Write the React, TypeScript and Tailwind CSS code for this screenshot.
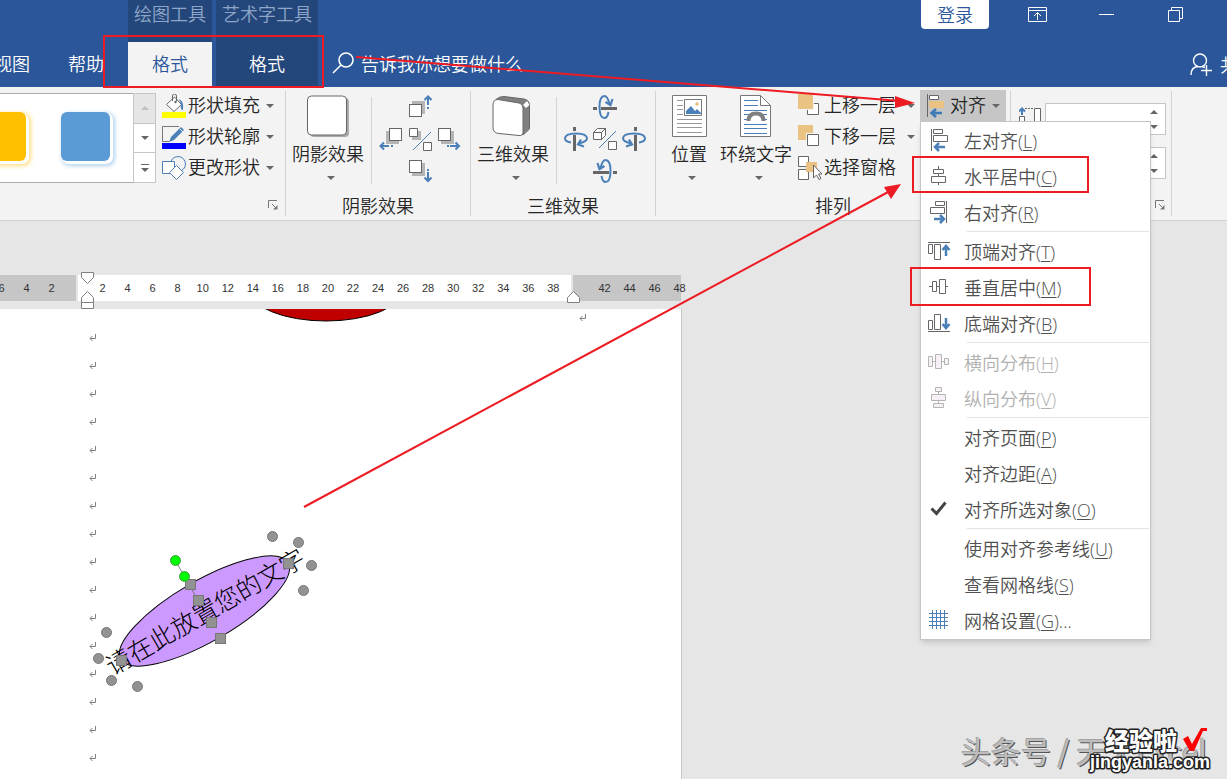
import React from 'react';

type IconProps = { className?: string };

// ── Shared bits ───────────────────────────────────────────────────────────

const Caret = ({ up = false, className = 'text-[#666]' }: { up?: boolean; className?: string }) => (
  <svg width="8" height="4" viewBox="0 0 8 4" className={`shrink-0 ${className}`} fill="currentColor">
    <path d={up ? 'M0 4h8L4 0z' : 'M0 0h8L4 4z'} />
  </svg>
);

const Divider = () => <div className="w-px bg-[#d2d2d2] my-1 shrink-0" />;

const Launcher = () => (
  <button type="button" aria-label="更多选项" className="shrink-0">
    <svg width="10" height="10" viewBox="0 0 10 10" fill="none" stroke="#777">
      <path d="M.5 8V.5H9M4 4l3 3" />
      <path d="M9.500 5v4.500H5z" fill="#777" stroke="none" />
    </svg>
  </button>
);

const Group = ({ label, launcher, className = '', children }: {
  label?: string; launcher?: boolean; className?: string; children: React.ReactNode;
}) => (
  <section className={`shrink-0 flex flex-col pt-[3px] ${className}`}>
    <div className="flex h-[94px]">{children}</div>
    <div className="flex items-center h-6 mt-[9px] text-lg leading-6">
      <span className="flex-1 text-center">{label}</span>
      {launcher && <Launcher />}
    </div>
  </section>
);

const BigButton = ({ icon, label }: { icon: React.ReactNode; label: string }) => (
  <button type="button" className="shrink-0 flex flex-col items-center pt-[5px] text-lg leading-6">
    {icon}
    <span className="mt-[3px] mb-[11px]">{label}</span>
    <Caret className="ml-[6px] text-[#666]" />
  </button>
);

// ── Ribbon icons ──────────────────────────────────────────────────────────

const FillIcon = () => (
  <svg width="24" height="24" viewBox="0 0 24 24" fill="none" stroke="#666">
    <path d="M4.500 10.500L12.500 3l7 7.500-7.500 7z" fill="#fff" />
    <path d="M10.500 7V2q0-2 2-2t2 2v5" />
    <path d="M17 5q5 2 4 11-3 0-2-6z" fill="#4a7fb8" stroke="none" />
    <circle cx="13.500" cy="8" r="1.200" fill="#666" stroke="none" />
    <path d="M0 18h24v6H0z" fill="#ff0" stroke="none" />
  </svg>
);

const OutlineIcon = () => (
  <svg width="24" height="24" viewBox="0 0 24 24" fill="none">
    <path d="M17 1.500H.5v15H7" stroke="#777" />
    <path d="M7 17l2-5L19 2l3 3L12 15z" fill="#4a7fb8" />
    <path d="M18 4l3 3" stroke="#f3f3f3" />
    <path d="M0 18h24v6H0z" fill="#00f" />
  </svg>
);

const ChangeShapeIcon = () => (
  <svg width="24" height="24" viewBox="0 0 24 24" fill="#fff" stroke="#4a7fb8">
    <circle cx="16" cy="8" r="7.500" fill="#f3f3f3" />
    <path d="M.5 5.500h12v12H.5z" />
    <path d="M14.500 9.500l7 7-7 7-7-7z" />
  </svg>
);

const ShadowIcon = () => (
  <svg width="44" height="43" viewBox="0 0 44 43">
    <rect x="4" y="3" width="39" height="39" rx="4" fill="#aaa" />
    <rect x="1.500" y="1" width="39" height="39" rx="4" fill="#fff" stroke="#666" />
  </svg>
);

const CubeIcon = () => (
  <svg width="44" height="43" viewBox="0 0 44 43" strokeLinejoin="round">
    <path d="M5 4.500q3-3 8-3l20 2.500q5 1 5.500 6v24l-6.500 6z" fill="#808080" stroke="#666" />
    <path d="M7 4.500l21 3.500q4 .5 4 5v24q0 4-4 3.500l-20-2q-6-.5-6-6V10q0-5.500 5-5.500z" fill="#fff" stroke="#666" />
    <path d="M32 10l4-4 2.500 4-3.500 3z" fill="#fff" />
  </svg>
);

const NudgeIcon = ({ dir }: { dir: 'up' | 'down' | 'left' | 'right' }) => {
  const s = {
    up: { bx: 3, by: -3, arrow: 'M20 14v-2M20 10V1M16.500 5L20 1.500 23.500 5', x: 1, y: 9 },
    down: { bx: 3, by: 3, arrow: 'M20 10v2M20 13v9M16.500 18.500L20 22l3.500-3.500', x: 1, y: 1 },
    left: { bx: -3, by: 3, arrow: 'M14 19h-2M10 19H1M5 15.500L1.500 19 5 22.500', x: 10, y: 1 },
    right: { bx: 3, by: 3, arrow: 'M10 19h2M13 19h9M18.500 15.500L22 19l-3.500 3.500', x: 1, y: 1 },
  }[dir];
  return (
    <svg width="24" height="24" viewBox="0 0 24 24" fill="none">
      <rect x={s.x + s.bx} y={s.y + s.by} width="13" height="13" fill="#b5b5b5" />
      <rect x={s.x + 0.5} y={s.y + 0.5} width="12" height="12" fill="#fff" stroke="#666" />
      <path d={s.arrow} stroke="#4a7fb8" strokeWidth="2" />
    </svg>
  );
};

const ShadowToggleIcon = () => (
  <svg width="24" height="24" viewBox="0 0 24 24" fill="none">
    <path d="M4 4h9v9H4z" fill="#b5b5b5" />
    <path d="M1.500 1.500h8v8h-8zM15.500 15.500h8v8h-8z" fill="#fff" stroke="#666" />
    <path d="M23 5L5 23" stroke="#4a7fb8" />
  </svg>
);

const CubeToggleIcon = () => (
  <svg width="24" height="24" viewBox="0 0 24 24" fill="#fff" stroke="#666">
    <path d="M.5 5.500l4-4h8v7l-4 4h-8zM.5 5.500h8l4-4M8.500 5.500v7M15.500 14.500h8v8h-8z" />
    <path d="M23 4L6 21" stroke="#4a7fb8" />
  </svg>
);

const tiltTransforms = {
  up: '',
  left: 'rotate(90 12 12)',
  right: 'translate(24 0) scale(-1 1) rotate(90 12 12)',
  down: 'translate(24 0) scale(-1 1)',
};

// Axis bar with the turning arrow wrapped around it
const TiltIcon = ({ dir }: { dir: keyof typeof tiltTransforms }) => (
  <svg width="24" height="24" viewBox="0 0 24 24" fill="none">
    <g transform={tiltTransforms[dir]}>
      <path d="M0 13.500h4M8 13.500h16" stroke="#666" strokeWidth="3" />
      <path d="M15.500 17q-1 6-4 6-5 0-5-11t5-11q3 0 5 8" stroke="#4a7fb8" strokeWidth="2" />
      <path d="M12.500 7l5 3 2-6" stroke="#4a7fb8" strokeWidth="2.200" />
    </g>
  </svg>
);

const PositionIcon = () => (
  <svg width="35" height="43" viewBox="0 0 35 43" fill="none">
    <path d="M.5.500h34v41H.5z" fill="#fff" stroke="#777" />
    <path d="M5 5.500h6M5 10.500h6M5 14.500h6M5 19.500h6M5 24.500h25M5 28.500h25M5 32.500h25M5 37.500h25" stroke="#999" />
    <path d="M12.500 4.500h17v16h-17z" fill="#fff" stroke="#777" />
    <path d="M14 19v-3l5-5 4 5 2-2 4 4v1z" fill="#4a7fb8" />
    <circle cx="25" cy="9" r="1.800" fill="#e9bd78" />
  </svg>
);

const WrapIcon = () => (
  <svg width="32" height="43" viewBox="0 0 32 43" fill="none">
    <path d="M.5.500h20l10 10v31H.5z" fill="#fff" stroke="#777" />
    <path d="M20.500.500v10h10" stroke="#777" />
    <path d="M4 5.500h14M4 10.500h14M4 15.500h23M4 19.500h5M23 19.500h4M4 24.500h3M25 24.500h2M4 29.500h23M4 33.500h23M4 38.500h23" stroke="#4a7fb8" />
    <path d="M8.500 26q0-7.500 7.500-7.500t7.500 7.500" stroke="#808080" strokeWidth="4" />
  </svg>
);

const ForwardIcon = () => (
  <svg width="22" height="24" viewBox="0 0 22 24" fill="none">
    <path d="M9.500 9.500h11v11h-11z" fill="#fff" stroke="#666" />
    <path d="M0 0h16v16H0z" fill="#f3f3f3" />
    <path d="M0 0h15v15H0z" fill="#eac282" />
  </svg>
);

const BackwardIcon = () => (
  <svg width="22" height="24" viewBox="0 0 22 24" fill="none">
    <path d="M0 0h15v15H0z" fill="#eac282" />
    <path d="M8 8h14v14H8z" fill="#f3f3f3" />
    <path d="M9.500 9.500h11v11h-11z" fill="#fff" stroke="#666" />
  </svg>
);

const PaneIcon = () => (
  <svg width="24" height="24" viewBox="0 0 24 24">
    <path d="M.5.500h10v10H.5zM.5 13.500h10v10H.5z" fill="#fff" stroke="#666" />
    <path d="M8 6h11v10H8z" fill="#eac282" />
    <path d="M15.500 9v13l3-3 2.500 4.500 2-1-2.500-4.500h3.500z" fill="#fff" stroke="#666" />
  </svg>
);

const AlignIcon = () => (
  <svg width="18" height="24" viewBox="0 0 18 24" fill="none">
    <path d="M.5 0v23" stroke="#666" />
    <path d="M2.500 1.500h9v4h-9z" fill="#fff" stroke="#666" />
    <path d="M2 7h15v7H2z" fill="#eac282" />
    <path d="M15 19H5M9 15l-4.500 4L9 23" stroke="#3e78b5" strokeWidth="2.500" />
  </svg>
);

// ── Menu icons ────────────────────────────────────────────────────────────

const MenuSvg = ({ children, muted }: { children: React.ReactNode; muted?: boolean }) => (
  <svg width="24" height="24" viewBox="0 0 24 24" fill={muted ? '#f7f1f7' : 'none'} stroke={muted ? '#b5b5b5' : '#666'} className="shrink-0">
    {children}
  </svg>
);

const blue = { stroke: '#4a7fb8', strokeWidth: 2.5, fill: 'none' };

const menuIcons = {
  left: (
    <MenuSvg>
      <path d="M4.500 1v22M6.500 1.500h9v4h-9zM6.500 7.500h14v6h-14z" />
      <path d="M18 19H8M12 15l-4 4 4 4" {...blue} />
    </MenuSvg>
  ),
  center: (
    <MenuSvg>
      <path d="M11.500 2v3M11.500 10v3M11.500 18v3M6.500 5.500h10v4h-10zM4.500 12.500h14v6h-14z" />
    </MenuSvg>
  ),
  right: (
    <MenuSvg>
      <path d="M19.500 1v22M8.500 1.500h9v4h-9zM3.500 7.500h14v6h-14z" />
      <path d="M7 19h10M13 15l4 4-4 4" {...blue} />
    </MenuSvg>
  ),
  top: (
    <MenuSvg>
      <path d="M1 3.500h22M1.500 5.500h4v9h-4zM7.500 5.500h6v15h-6z" />
      <path d="M19 17V7M15.500 11L19 7l3.500 4" {...blue} />
    </MenuSvg>
  ),
  middle: (
    <MenuSvg>
      <path d="M2 11.500h3M9 11.500h3M18 11.500h3M5.500 6.500h4v10h-4zM12.500 4.500h6v14h-6z" />
    </MenuSvg>
  ),
  bottom: (
    <MenuSvg>
      <path d="M1 20.500h22M1.500 9.500h4v9h-4zM7.500 3.500h6v15h-6z" />
      <path d="M19 7v10M15.500 13L19 17l3.500-4" {...blue} />
    </MenuSvg>
  ),
  horizontal: (
    <MenuSvg muted>
      <path d="M5 11.500h3M14 11.500h3M1.500 6.500h4v10h-4zM8.500 4.500h6v14h-6zM17.500 8.500h4v6h-4z" />
    </MenuSvg>
  ),
  vertical: (
    <MenuSvg muted>
      <path d="M11.500 5v3M11.500 14v3M8.500 1.500h6v4h-6zM4.500 8.500h14v6h-14zM6.500 17.500h10v4h-10z" />
    </MenuSvg>
  ),
  check: (
    <MenuSvg>
      <path d="M4.500 11.500l5 5 9-11" stroke="#444" strokeWidth="3" />
    </MenuSvg>
  ),
  grid: (
    <MenuSvg>
      <path d="M5.500 2v19M9.500 2v19M13.500 2v19M17.500 2v19M2 5.500h19M2 9.500h19M2 13.500h19M2 17.500h19" stroke="#4a7fb8" />
    </MenuSvg>
  ),
};

type MenuEntry = { text: string; hotkey: string; icon?: keyof typeof menuIcons; disabled?: boolean; tail?: string };

const menuSections: MenuEntry[][] = [
  [
    { text: '左对齐', hotkey: 'L', icon: 'left' },
    { text: '水平居中', hotkey: 'C', icon: 'center' },
    { text: '右对齐', hotkey: 'R', icon: 'right' },
  ],
  [
    { text: '顶端对齐', hotkey: 'T', icon: 'top' },
    { text: '垂直居中', hotkey: 'M', icon: 'middle' },
    { text: '底端对齐', hotkey: 'B', icon: 'bottom' },
  ],
  [
    { text: '横向分布', hotkey: 'H', icon: 'horizontal', disabled: true },
    { text: '纵向分布', hotkey: 'V', icon: 'vertical', disabled: true },
  ],
  [
    { text: '对齐页面', hotkey: 'P' },
    { text: '对齐边距', hotkey: 'A' },
    { text: '对齐所选对象', hotkey: 'O', icon: 'check' },
  ],
  [
    { text: '使用对齐参考线', hotkey: 'U' },
    { text: '查看网格线', hotkey: 'S' },
    { text: '网格设置', hotkey: 'G', icon: 'grid', tail: '...' },
  ],
];

const AlignMenu = () => (
  <div role="menu" className="absolute left-0 top-full z-10 w-[231px] bg-white border border-[#c6c6c6] pb-px shadow-md font-['Open_Sans','Noto_Sans_CJK_SC',sans-serif]">
    {menuSections.map((section, i) => (
      <React.Fragment key={i}>
        {i > 0 && <div className="h-px my-px ml-[46px] mr-px bg-[#e1e3e6]" />}
        {section.map(item => (
          <button
            key={item.text}
            type="button"
            role="menuitem"
            disabled={item.disabled}
            className={`flex items-center w-full h-9 pl-[6px] gap-[13px] text-lg font-[350] whitespace-nowrap ${item.disabled ? 'text-[#b1b1b1]' : 'text-[#505050]'}`}
          >
            {item.icon ? menuIcons[item.icon] : <span className="w-6 shrink-0" />}
            <span className="pt-[2px]">{item.text}(<span className="underline underline-offset-2">{item.hotkey}</span>){item.tail}</span>
          </button>
        ))}
      </React.Fragment>
    ))}
  </div>
);

// ── Title bar ─────────────────────────────────────────────────────────────

const ContextTab = ({ title, active, className }: { title: string; active?: boolean; className: string }) => (
  <div className={`shrink-0 flex flex-col bg-[#24477b] ${className}`}>
    <div className="h-[42px] pt-px text-center leading-6 text-[#8fa6c8]">{title}</div>
    <button type="button" className={`flex-1 pb-1 ${active ? 'bg-[#f3f3f3] text-[#2b579a]' : 'text-white'}`}>格式</button>
  </div>
);

const UserPlusIcon = ({ className }: IconProps) => (
  <svg width="23" height="23" viewBox="0 0 23 23" fill="none" stroke="#fff" strokeWidth="1.400" className={className}>
    <circle cx="10" cy="7.500" r="6.500" />
    <path d="M1 22q0-8 7-8.500M12 13.500l3 1M11 17.500h11M16.500 12v11" />
  </svg>
);

const TitleBar = () => (
  <header className="flex h-[87px] shrink-0 bg-[#2b579a] text-white text-lg font-[350] whitespace-nowrap overflow-hidden">
    <div className="w-32 shrink-0 flex justify-end gap-[38px] pt-[42px] pb-1 pr-6 overflow-hidden">
      <button type="button" className="shrink-0">视图</button>
      <button type="button" className="shrink-0">帮助</button>
    </div>
    <ContextTab title="绘图工具" active className="w-[84px]" />
    <ContextTab title="艺术字工具" className="w-[102px] ml-1" />
    <button type="button" className="flex items-center gap-[6px] pt-[42px] pb-1 pl-[14px]">
      <svg width="23" height="24" viewBox="0 0 23 24" fill="none" stroke="#fff" strokeWidth="1.600">
        <circle cx="14" cy="9" r="7" />
        <path d="M9 14l-8 8" />
      </svg>
      告诉我你想要做什么
    </button>
    <div className="ml-auto shrink-0 flex flex-col">
      <div className="flex items-center h-[29px] pr-[43px]">
        <button type="button" className="w-[68px] h-full pb-[2px] rounded-b-sm bg-white text-[#2b579a]">登录</button>
        <button type="button" aria-label="功能区显示选项" className="ml-[39px]">
          <svg width="20" height="16" viewBox="0 0 20 16" fill="none" stroke="#fff">
            <path d="M.5.500h18v14H.5zM.5 3.500h18M9.500 13V6M6 9l3.500-3.500L13 9" />
          </svg>
        </button>
        <button type="button" aria-label="最小化" className="ml-[51px]">
          <svg width="15" height="16" viewBox="0 0 15 16" stroke="#fff"><path d="M0 7.500h15" /></svg>
        </button>
        <button type="button" aria-label="还原" className="ml-[54px]">
          <svg width="16" height="16" viewBox="0 0 16 16" fill="none" stroke="#fff">
            <path d="M.5 3.500h11v11H.5zM3.500 3V.500h11v11H12" />
          </svg>
        </button>
      </div>
      <button type="button" className="flex items-center justify-end gap-[7px] mt-[21px] -mr-[29px]">
        <UserPlusIcon />
        共享
      </button>
    </div>
  </header>
);

// ── Ribbon ────────────────────────────────────────────────────────────────

const ShapeRow = ({ icon, label }: { icon: React.ReactNode; label: string }) => (
  <button type="button" className="flex items-center h-[31px] gap-[2px] text-lg">
    {icon}
    <span className="pb-[3px] mr-1">{label}</span>
    <Caret />
  </button>
);

const ArrangeRow = ({ icon, label, split }: { icon: React.ReactNode; label: string; split?: boolean }) => (
  <div className="flex items-center h-[31px] text-lg">
    <button type="button" className="flex items-center">
      <span className="w-[26px] shrink-0">{icon}</span>
      <span className="pb-[3px]">{label}</span>
    </button>
    {split && <button type="button" aria-label={`${label}选项`} className="flex ml-[11px]"><Caret /></button>}
  </div>
);

const SizeField = ({ label }: { label: string }) => (
  <div className="flex w-[121px] h-8 bg-white border border-[#c6c6c6]">
    <input type="text" aria-label={label} className="flex-1 min-w-0 px-2 outline-none" />
    <div className="flex flex-col justify-around items-center w-[22px]">
      <button type="button" aria-label={`增加${label}`} className="flex h-3 items-center"><Caret up /></button>
      <button type="button" aria-label={`减少${label}`} className="flex h-3 items-center"><Caret /></button>
    </div>
  </div>
);

const EffectPad = ({ up, left, mid, right, down }: Record<'up' | 'left' | 'mid' | 'right' | 'down', React.ReactNode>) => (
  <div className="grid grid-cols-3 w-[90px] h-24 ml-[5px] mt-px place-items-center">
    <button type="button" aria-label="上" className="col-start-2">{up}</button>
    <button type="button" aria-label="左" className="col-start-1">{left}</button>
    <button type="button" aria-label="开关">{mid}</button>
    <button type="button" aria-label="右">{right}</button>
    <button type="button" aria-label="下" className="col-start-2">{down}</button>
  </div>
);

const ShortDivider = () => <div className="w-px ml-[7px] mt-[7px] bg-[#d2d2d2]" />;

const Ribbon = () => (
  <div className="flex h-[134px] shrink-0 bg-[#f3f3f3] border-b border-[#d2d2d2] text-[#262626] font-[350] whitespace-nowrap">
    <Group launcher className="w-[285px] pr-[7px]">
      <div className="flex h-[90px] mt-[3px] shrink-0">
        <div className="flex items-center w-[133px] gap-[35px] pb-1 border-y border-[#ababab] bg-white overflow-hidden">
          <button type="button" aria-label="黄色样式" className="shrink-0 -ml-[23px] size-[49px] rounded-md bg-[#ffc000] shadow-[2px_2px_0_1px_#fff,3px_3px_4px_2px_#ffdf85]" />
          <button type="button" aria-label="蓝色样式" className="shrink-0 size-[49px] rounded-md bg-[#5b9bd5] shadow-[2px_2px_0_1px_#fff,3px_3px_4px_2px_#b3d2ee]" />
        </div>
        <div className="flex flex-col w-[23px] border border-[#c6c6c6] bg-white divide-y divide-[#c6c6c6]">
          <button type="button" aria-label="上一行" className="flex flex-1 items-center justify-center bg-[#e5e5e5]"><Caret up className="text-[#c0c0c0]" /></button>
          <button type="button" aria-label="下一行" className="flex flex-1 items-center justify-center"><Caret /></button>
          <button type="button" aria-label="其他样式" className="flex flex-1 flex-col gap-[3px] items-center justify-center">
            <span className="w-2 h-px bg-[#666]" />
            <Caret />
          </button>
        </div>
      </div>
      <div className="ml-[6px]">
        <ShapeRow icon={<FillIcon />} label="形状填充" />
        <ShapeRow icon={<OutlineIcon />} label="形状轮廓" />
        <ShapeRow icon={<ChangeShapeIcon />} label="更改形状" />
      </div>
    </Group>
    <Divider />
    <Group label="阴影效果" className="w-[184px] pl-[6px] pr-[6px]">
      <BigButton icon={<ShadowIcon />} label="阴影效果" />
      <ShortDivider />
      <EffectPad
        up={<NudgeIcon dir="up" />}
        left={<NudgeIcon dir="left" />}
        mid={<ShadowToggleIcon />}
        right={<NudgeIcon dir="right" />}
        down={<NudgeIcon dir="down" />}
      />
    </Group>
    <Divider />
    <Group label="三维效果" className="w-[184px] pl-[6px] pr-[6px]">
      <BigButton icon={<CubeIcon />} label="三维效果" />
      <ShortDivider />
      <EffectPad
        up={<TiltIcon dir="up" />}
        left={<TiltIcon dir="left" />}
        mid={<CubeToggleIcon />}
        right={<TiltIcon dir="right" />}
        down={<TiltIcon dir="down" />}
      />
    </Group>
    <Divider />
    <Group label="排列" className="w-[354px]">
      <div className="flex gap-[13px] ml-[15px]">
        <BigButton icon={<PositionIcon />} label="位置" />
        <BigButton icon={<WrapIcon />} label="环绕文字" />
      </div>
      <div className="w-[122px] ml-[6px] shrink-0">
        <ArrangeRow icon={<ForwardIcon />} label="上移一层" split />
        <ArrangeRow icon={<BackwardIcon />} label="下移一层" split />
        <ArrangeRow icon={<PaneIcon />} label="选择窗格" />
      </div>
      <div className="relative self-start">
        <button type="button" aria-haspopup="menu" aria-expanded="true" className="flex items-center w-[86px] h-[31px] pl-[7px] bg-[#c6c6c6] text-lg">
          <AlignIcon />
          <span className="ml-[5px] mr-[6px] pb-[3px]">对齐</span>
          <Caret />
        </button>
        <AlignMenu />
      </div>
    </Group>
    <Divider />
    <Group launcher className="w-[160px] pl-2 pr-[6px]">
      <svg width="23" height="24" viewBox="0 0 23 24" fill="none" stroke="#666" className="shrink-0 mt-[15px]">
        <path d="M.5 24V11.500h5V24M15.500 24V3.500h6V24" fill="#fff" />
        <path d="M6 3.500h9" strokeDasharray="2 1" />
        <path d="M3 10V4M0 6.500L3 3.500l3 3" stroke="#4a7fb8" strokeWidth="2" />
      </svg>
      <div className="flex flex-col gap-3 ml-[3px] pt-[13px]">
        <SizeField label="高度" />
        <SizeField label="宽度" />
      </div>
    </Group>
    <Divider />
  </div>
);

// ── Ruler ─────────────────────────────────────────────────────────────────

const bodyTicks = Array.from({ length: 19 }, (_, i) => (i + 1) * 2);

const Ruler = () => (
  <div className="relative flex gap-[2px] w-[681px] h-[26px] mt-[54px] shrink-0 text-[11px] leading-[26px] text-center text-[#333] font-['Liberation_Sans',sans-serif]">
    <div className="w-[76px] shrink-0 flex justify-end pr-3 bg-[#c6c6c6] overflow-hidden">
      {[6, 4, 2].map(n => <span key={n} className="w-[25px] shrink-0">{n}</span>)}
    </div>
    <div className="flex flex-1 pl-3 pr-[5px] bg-white">
      {bodyTicks.map(n => <span key={n} className="flex-1">{n}</span>)}
    </div>
    <div className="w-[108px] shrink-0 flex pl-[19px] bg-[#c6c6c6]">
      {[42, 44, 46, 48].map(n => <span key={n} className="w-[25px] shrink-0">{n}</span>)}
    </div>
    {/* Indent markers sit over the scale */}
    <svg width="14" height="38" viewBox="0 0 14 38" fill="#fff" stroke="#808080" className="absolute left-[81px] -top-[3px]">
      <path d="M.5.500h12v5l-6 6-6-6zM.5 30.500v-5l6-6 6 6v5zM.5 30.500h12v6H.5z" />
    </svg>
    <svg width="14" height="13" viewBox="0 0 14 13" fill="#fff" stroke="#808080" className="absolute left-[567px] top-4">
      <path d="M.5 11.500v-5l6-6 6 6v5z" />
    </svg>
  </div>
);

// ── Document ──────────────────────────────────────────────────────────────

const ParagraphMark = ({ className = 'shrink-0' }: IconProps) => (
  <svg width="8" height="8" viewBox="0 0 8 8" fill="none" stroke="#808080" className={className}>
    <path d="M6.500 0v4.500H1M3.500 2L1 4.500 3.500 7" />
  </svg>
);

const squareHandles = [[190, 275], [198, 291], [211, 313], [220, 329], [121, 351], [288, 254]];
const roundHandles = [[272, 227], [298, 233], [311, 256], [303, 281], [106, 323], [98, 349], [111, 371], [137, 377]];
const rotateHandles = [[175, 251], [184, 267]];

const Page = () => (
  <main className="relative flex-1 w-[682px] mt-2 bg-white border-r border-[#c6c6c6] overflow-hidden">
    <div className="flex flex-col gap-5 pt-[25px] pl-[89px]">
      {Array.from({ length: 16 }, (_, i) => <ParagraphMark key={i} />)}
    </div>
    <ParagraphMark className="absolute left-[579px] top-[5px]" />
    <svg width="681" height="470" viewBox="0 0 681 470" className="absolute left-0 top-0">
      <ellipse cx="326" cy="-20" rx="77" ry="32" fill="#c00000" stroke="#000" />
      <ellipse cx="204.500" cy="302" rx="96.500" ry="30.500" transform="rotate(-30 204.500 302)" fill="#cc99ff" stroke="#000" />
      <text
        x="205"
        y="312"
        textAnchor="middle"
        transform="rotate(-30 205 302)"
        className="text-[25px] font-light font-['Liberation_Serif','Noto_Sans_CJK_SC',serif]"
      >
        请在此放置您的文字
      </text>
      <path d="M175 251l23 40" stroke="#666" strokeWidth=".8" />
      {squareHandles.map(([x, y]) => (
        <rect key={`${x}-${y}`} x={x - 4.5} y={y - 4.5} width="10" height="10" fill="#929292" stroke="#777" />
      ))}
      {roundHandles.map(([x, y]) => (
        <circle key={`${x}-${y}`} cx={x + 0.5} cy={y + 0.5} r="5" fill="#929292" stroke="#777" />
      ))}
      {rotateHandles.map(([x, y]) => (
        <circle key={`${x}-${y}`} cx={x + 0.5} cy={y + 0.5} r="5" fill="#0f0" stroke="#4a9a4a" />
      ))}
    </svg>
  </main>
);

// ── Overlays ──────────────────────────────────────────────────────────────

const Annotations = () => (
  <svg width="1227" height="520" viewBox="0 0 1227 520" fill="none" stroke="#ed1c24" strokeWidth="2" className="absolute left-0 top-0 z-20 pointer-events-none">
    <path d="M104 36h219v51H104zM913 157h175v35H913zM911 268h179v37H911z" />
    <path d="M356 57l544 44M304 507l586-316" />
    <path d="M915 103l-20-7v12zM901 184l-17 3 7 12z" fill="#ed1c24" stroke="none" />
  </svg>
);

const Watermark = () => (
  <div className="absolute right-4 bottom-0 z-20 w-[250px] h-[54px] whitespace-nowrap">
    <span className="absolute left-0 top-[2px] text-[30px] leading-[46px] text-[#bdbdbd] [text-shadow:1px_1px_0_#555,-1px_-1px_0_#a5a5a5]">头条号 / 天天Excel</span>
    <svg width="126" height="54" viewBox="0 0 126 54" className="absolute right-0 top-0 overflow-visible font-['Liberation_Sans','Noto_Sans_CJK_SC',sans-serif] font-bold">
      <g fill="#fff" stroke="#222" strokeWidth="3" strokeLinejoin="round" paintOrder="stroke">
        <text x="20" y="25" className="text-[24px] font-black">经验啦</text>
        <text x="5" y="43" className="text-[18px]">jingyanla.com</text>
      </g>
      <path d="M98 14l5-3 4 8L116 3h6v3h-4L109 26h-4z" fill="#f00" />
    </svg>
  </div>
);

export default function App() {
  return (
    <div className="relative flex flex-col h-screen overflow-hidden bg-[#e6e6e6] font-['Noto_Sans_CJK_SC',sans-serif]">
      <TitleBar />
      <Ribbon />
      <Ruler />
      <Page />
      <Annotations />
      <Watermark />
    </div>
  );
}
